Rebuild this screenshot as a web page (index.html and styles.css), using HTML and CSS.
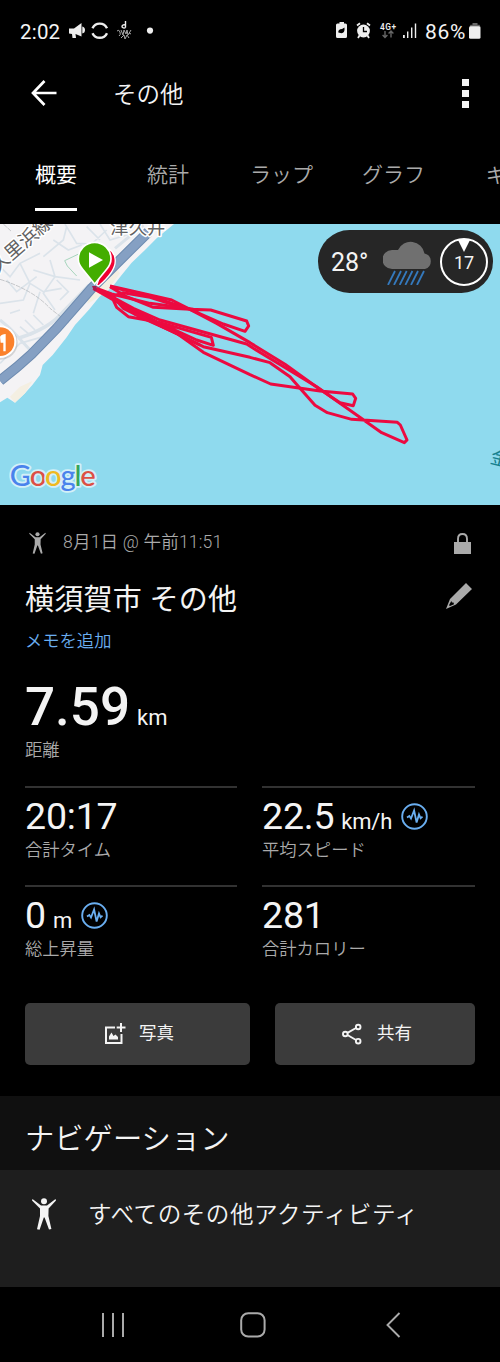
FILE: index.html
```html
<!DOCTYPE html>
<html lang="ja">
<head>
  <meta charset="UTF-8" />
  <meta name="viewport" content="width=device-width, initial-scale=1.0"/>
  <title>その他</title>
  <link rel="stylesheet" href="styles.css">
</head>
<body>
  <svg width="0" height="0" class="defs">
    <symbol id="person" viewBox="0 0 24 32">
      <circle cx="12" cy="3.3" r="3"/>
      <path d="M0.5 1 L9 7.6 H15 L23.5 1 L24 2.6 L16.6 10.4 L16.4 18 L19.4 31 L17 31.6 L12.6 19.6 H11.8 L7.6 31.8 L5 31.2 L8 18 V10.4 L0 2.6Z"/>
    </symbol>
    <symbol id="pulse" viewBox="0 0 27 27">
      <circle cx="13.5" cy="13.5" r="12.3" fill="none" stroke="#6aaef0" stroke-width="1.9"/>
      <path d="M6 14.6 L8.4 13 L10 15.6 L13.1 7.5 L15.6 19.5 L18 11.5 L19.6 15.3 L21.5 13.6" fill="none" stroke="#6aaef0" stroke-width="1.8"/>
    </symbol>
  </svg>

  <div class="status-bar">
    <span class="clock">2:02</span>
    <svg class="status-left" width="90" height="20" viewBox="0 0 90 20" fill="#eee">
      <path d="M0 7.5 H5 L12.500 2 V15.5 L6.500 13 L7 17 H3.500 L3 13 L0 12.500Z M13.300 5.500 Q16 6 16 9 Q16 12 13.300 12.500Z"/>
      <path d="M23.5 7.2 A8 8 0 0 1 38 7.2 M23.5 12.2 A8 8 0 0 0 38 12.2" fill="none" stroke="#eee" stroke-width="2.4"/>
      <path d="M56.5 0 V6.5 M56.5 4.3 a2 1.6 0 1 0 0 2.2" fill="none" stroke="#eee" stroke-width="1.4"/>
      <path d="M48 10 q2 -2 3 1 t-1 4 M52 9 l2 5 l1 -5 l2 4 l1 -4 l1 5 l3 -5 M52 17 l3 -3 l1 4 l2 -4 l2 3 M60 12 l2 1" fill="none" stroke="#aaa" stroke-width="1"/>
      <circle cx="81" cy="9.6" r="3.1"/>
    </svg>
    <svg class="status-right" width="82" height="18" viewBox="0 0 82 18" fill="#eee">
      <path d="M3.5 1.5 V0 H8 V1.5 H9.5 Q11 1.5 11 3 V14.5 Q11 16 9.5 16 H1.5 Q0 16 0 14.5 V3 Q0 1.5 1.5 1.5Z"/>
      <path d="M2.3 10.5 Q2 7 6 7 L8.5 5.5 Q9 11 5.5 11.3 Z" fill="#000"/>
      <circle cx="27.5" cy="9" r="6.4"/>
      <path d="M21 3.5 L24 1.2 M31 1.2 L34 3.5 M23.5 13.5 L22 16 M31.5 13.5 L33 16" stroke="#eee" stroke-width="1.8"/>
      <path d="M27.5 5 V9.5 H31" fill="none" stroke="#000" stroke-width="1.3"/>
      <text x="44" y="7.5" font-size="8.3" font-weight="600" textLength="16">4G+</text>
      <path d="M49 9 V15.5 M46.6 13 L49 15.5 L51.4 13 M55 15.5 V9 M52.6 11.5 L55 9 L57.4 11.5" fill="none" stroke="#666" stroke-width="1.4"/>
      <path d="M67 13 h1.8 v3 h-1.8z M71 9.5 h1.4 v6.5 h-1.4z M75 5.5 h1.4 v10.5 h-1.4z M78.8 1.5 h1.4 v14.5 h-1.4z"/>
    </svg>
    <span class="battery-text">86%</span>
    <svg width="12" height="16" viewBox="0 0 12 16">
      <path d="M3.5 0 h5 v1.8 h2 l1 2 H.5 l1 -2 h2z" fill="#666"/>
      <rect y="3.2" width="11.5" height="12.5" rx="1.5" fill="#eee"/>
    </svg>
  </div>

  <header class="app-bar">
    <svg width="26" height="26" viewBox="0 0 26 26" fill="none" stroke="#fff" stroke-width="2.7">
      <path d="M25.500 13 H2 M13.500 1 L2 13 L13.500 25"/>
    </svg>
    <h1>その他</h1>
    <div class="menu"><i></i><i></i><i></i></div>
  </header>

  <nav class="tabs">
    <a class="tab active">概要</a>
    <a class="tab">統計</a>
    <a class="tab">ラップ</a>
    <a class="tab">グラフ</a>
    <a class="tab">ギ</a>
  </nav>

  <div class="map">
    <svg class="map-art" width="500" height="281" viewBox="0 12 1500 843">
      <rect y="12" width="1500" height="843" fill="#8fdaee"/>
      <!-- land and beach -->
      <path d="M0 12 H522 L470 55 L435 90 L395 128 L365 165 L335 203 L300 228 L268 268 L225 315 L200 352 L158 405 L128 435 L120 465 L97 495 L75 520 L45 548 L22 533 L0 547Z" fill="#f4f3f5"/>
      <path d="M268 214 L345 140 L360 160 L330 200 L300 228 L262 252 Z M60 500 L97 483 L75 520 L45 548 L30 530Z" fill="#f4efe2"/>
      <g fill="none" stroke="#dbe3ea" stroke-width="5">
        <path d="M195 12 L230 70 L275 72 L320 30 M160 60 L205 90 L245 75 M130 110 L190 60 L200 20 M100 150 L165 170 L240 180 M150 120 L165 170 L130 220 L165 270 M60 130 L90 190 L70 240 L0 250 M90 190 L130 215 L185 205 M0 140 L30 170 L60 130 L120 100 M20 180 L50 215 L110 170 M120 215 L100 280 M170 180 L205 215 L180 240 M30 280 L60 270 M60 320 L90 345 L120 330 M75 300 L105 330 M100 285 L130 315 M10 350 L40 330 M0 430 L60 370 L130 350 M260 20 L300 60 M300 12 L330 60 L395 40"/>
        <path d="M55 355 Q150 325 190 275 L268 195" stroke-width="11"/>
        <path d="M0 300 L30 325 L90 390 M345 85 L430 15" stroke-width="9"/>
      </g>
      <path d="M0 178 Q100 210 150 265 L205 308 M10 12 L35 35" fill="none" stroke="#aeb0b3" stroke-width="2" stroke-dasharray="14 3"/>
      <path d="M240 100 L194 122 L202 138 L230 168" fill="none" stroke="#a7d5bd" stroke-width="3"/>
      <path d="M445 36 L360 120 L275 205 L170 325 L95 402 L50 442 L0 482" fill="none" stroke="#6d8bb0" stroke-width="31"/>
      <path d="M445 36 L360 120 L275 205 L170 325 L95 402 L50 442 L0 482" fill="none" stroke="#85a0c3" stroke-width="25"/>
      <g class="map-label">
        <text transform="translate(-8 160) rotate(-41)" font-size="56">久里浜線</text>
        <text x="331" y="42" font-size="55">津久井</text>
        <text class="sea" transform="translate(1468 728) rotate(14)" font-size="58">金</text>
      </g>
      <circle cx="2" cy="368" r="51" fill="#888" opacity=".3"/>
      <circle cx="0" cy="365" r="49" fill="#fff"/>
      <circle cx="0" cy="365" r="43" fill="#fb812b"/>
      <path d="M0 350 Q5 342 17 342 V394 H10 V368 H2Z" fill="#fff"/>
      <!-- recorded track -->
      <g fill="none" stroke="#ec0a40" stroke-width="9" stroke-linejoin="round">
        <path d="M330 198 L515 240 L570 268 L670 312 L735 334 L746 318 L740 303 L632 270 L570 268 L460 262 L380 230 L330 200"/>
        <path d="M280 205 L340 240 L470 305 L590 360 L640 376 L634 352 L540 325 L470 305 L385 290 L350 262 L335 230 L280 205"/>
        <path d="M330 200 L440 225 L570 268 L650 310 L750 368 L855 433 L955 505 L1020 548 L1060 557 L1067 535 L1058 522 L960 513 L812 492 L750 464 L610 397 L530 340 L440 300 L370 265 L335 225"/>
        <path d="M335 230 L400 265 L480 300 L740 372 L760 385 L950 500 L1088 598 L1145 638 L1213 668 L1221 660 L1201 615 L1192 607 L1055 598 L982 578 L945 556 L900 505 L870 470 L810 428 L750 412 L610 380 L470 312 L385 270 L335 230 L370 218 L450 232 L545 262"/>
        <path d="M290 205 L335 222 L450 250 L580 268 M400 280 L500 325 L600 375"/>
      </g>
      <!-- finish and start pins -->
      <path d="M296 198 Q352 150 345 115 Q342 95 328 88 L290 195Z" fill="#f00032" stroke="#fff" stroke-width="4"/>
      <path d="M284 192 L248 148 Q234 132 235 116 A49 49 0 0 1 333 116 Q333 132 320 148Z" fill="#43ad00" stroke="#fff" stroke-width="5"/>
      <path d="M267 97 L309 120 L267 143Z" fill="#fff"/>
      <path d="M276 198 h14 v14 h-8z" fill="#a51c4f"/>
      <text class="google" x="29" y="798" textLength="258"><tspan fill="#4a83ec">G</tspan><tspan fill="#dd5045">o</tspan><tspan fill="#efb920">o</tspan><tspan fill="#4a83ec">g</tspan><tspan fill="#36a55a">l</tspan><tspan fill="#dd5045">e</tspan></text>
    </svg>
    <div class="weather">
      <span class="temp">28°</span>
      <svg width="50" height="46" viewBox="0 0 50 46">
        <path d="M9 30 A9.5 9.5 0 0 1 9 11 L15 11 A14 14 0 0 1 41.5 14.5 A8 8 0 0 1 42 30Z" fill="#707070"/>
        <path d="M5 46 L12 32 M11 46 L18 32 M16.700 46 L23.7 32 M22.400 46 L29.4 32 M28 46 L35 32 M34 46 L41 32" stroke="#3479bd" stroke-width="1.8"/>
      </svg>
      <div class="wind">
        <svg width="12" height="12" viewBox="0 0 12 12"><path d="M0 0 H12 L6 12Z" fill="#fff"/></svg>
        <span>17</span>
      </div>
    </div>
  </div>

  <main class="summary">
    <div class="date-row">
      <svg width="17" height="22" fill="#aaa"><use href="#person"/></svg>
      <span>8月1日 @ 午前11:51</span>
      <svg class="lock" width="17" height="21" viewBox="0 0 17 21">
        <path d="M4 10 V6 Q4 1 8.500 1 T13 6 V10" fill="none" stroke="#aaa" stroke-width="1.9"/>
        <rect y="9" width="17" height="12" fill="#aaa"/>
      </svg>
    </div>
    <div class="title-row">
      <h2>横須賀市 その他</h2>
      <svg width="26" height="26" viewBox="0 0 26 26" fill="#aaa">
        <path fill-rule="evenodd" d="M20 0 L26 6 L10 21.5 L0 26 L4 16Z M5.300 18 L3 22.200 L4 23 L8 21.300 L7.500 19.500 L6 19.500Z"/>
      </svg>
    </div>
    <a class="note">メモを追加</a>

    <div class="distance"><b>7.59</b><span class="unit">km</span></div>
    <div class="label">距離</div>

    <div class="stats">
      <div class="stat">
        <div class="value">20:17</div>
        <div class="label">合計タイム</div>
      </div>
      <div class="stat">
        <div class="value">22.5<span class="unit">km/h</span><svg class="badge" width="27" height="27"><use href="#pulse"/></svg></div>
        <div class="label">平均スピード</div>
      </div>
      <div class="stat">
        <div class="value">0<span class="unit">m</span><svg class="badge" width="27" height="27"><use href="#pulse"/></svg></div>
        <div class="label">総上昇量</div>
      </div>
      <div class="stat">
        <div class="value">281</div>
        <div class="label">合計カロリー</div>
      </div>
    </div>

    <div class="actions">
      <button class="photo-btn">
        <svg width="22" height="22" viewBox="0 0 22 22" fill="none" stroke="#f4f4f4">
          <path d="M11 4.500 H2 V20 H17.500 V11" stroke-width="2"/>
          <path d="M17 0 V9 M12.700 4.500 H21.500" stroke-width="2"/>
          <path d="M5 16.500 V13.500 L7.500 9.500 L9.500 13 L11.500 11.500 L14 14 V16.500Z" fill="#f4f4f4" stroke="none"/>
        </svg>
        <span>写真</span>
      </button>
      <button class="share-btn">
        <svg width="20" height="22" viewBox="0 0 20 22" fill="none" stroke="#f4f4f4" stroke-width="1.900">
          <path d="M5.500 9.800 L14 5 M5.500 12 L14 17"/>
          <circle cx="3.300" cy="11" r="2.300"/><circle cx="16.200" cy="4" r="2.300"/><circle cx="16.200" cy="18.200" r="2.300"/>
        </svg>
        <span>共有</span>
      </button>
    </div>
  </main>

  <h3 class="section-title">ナビゲーション</h3>
  <div class="list-item">
    <svg width="24" height="32" fill="#f4f4f4"><use href="#person"/></svg>
    <span>すべてのその他アクティビティ</span>
  </div>

  <footer class="nav-bar">
    <svg width="24" height="24" viewBox="0 0 24 24" stroke="#aaa" stroke-width="2"><path d="M2 0 V24 M12 0 V24 M22 0 V24"/></svg>
    <svg class="home" width="26" height="26" viewBox="0 0 26 26"><rect x="1.200" y="1.200" width="23.400" height="23.400" rx="7" fill="none" stroke="#aaa" stroke-width="2"/></svg>
    <svg width="15" height="26" viewBox="0 0 15 26" fill="none" stroke="#aaa" stroke-width="1.900"><path d="M13.500 1 L1.500 13 L13.500 25"/></svg>
  </footer>
</body>
</html>
```

FILE: styles.css
```css
* { box-sizing: border-box; }
body {
  margin: 0;
  width: 500px;
  height: 1362px;
  overflow: hidden;
  background: #000;
  color: #f4f4f4;
  font-family: Roboto, 'Noto Sans CJK JP', sans-serif;
}
svg { display: block; flex: none; }
.defs { display: none; }
h1, h2, h3 { margin: 0; font-weight: 350; }
.status-bar {
  height: 62px;
  padding: 0 19px 0 20px;
  display: flex;
  align-items: center;
}
.clock, .battery-text { padding-top: 1px; font-size: 20.5px; line-height: 24px; }
.clock { letter-spacing: 0.2px; }
.status-left { margin-left: 9px; }
.status-right { margin-left: auto; }
.battery-text { margin: 0 3px 0 7px; font-size: 21px; letter-spacing: 0.7px; }
.app-bar {
  height: 62px;
  padding: 0 31px;
  display: flex;
  align-items: center;
}
h1 {
  margin-left: 56px;
  padding-top: 3px;
  font-size: 23.5px;
  line-height: 34px;
}
.menu {
  margin-left: auto;
  display: flex;
  flex-direction: column;
  gap: 4px;
}
.menu i { width: 7px; height: 7px; background: #f4f4f4; }
.tabs {
  height: 100px;
  padding: 33px 0 13px 35px;
  display: grid;
  grid-template-columns: 112px 103px 112px 124px 60px;
  justify-items: start;
  overflow: hidden;
}
.tab {
  height: 54px;
  font-size: 21px;
  line-height: 36px;
  font-weight: 350;
  color: #aaa;
  white-space: nowrap;
}
.tab.active {
  color: #fff;
  font-weight: 400;
  border-bottom: 3px solid #fff;
}
.map { position: relative; height: 281px; }
.map-label {
  fill: #626262;
  stroke: #fff;
  stroke-width: 9px;
  stroke-linejoin: round;
  paint-order: stroke;
}
.map-label .sea { fill: #16808f; stroke: none; }
.google {
  font-family: Lato, sans-serif;
  font-size: 88px;
  font-weight: 500;
  stroke: #d3f0f8;
  stroke-width: 11px;
  stroke-linejoin: round;
  paint-order: stroke;
}
.weather {
  position: absolute;
  top: 6px;
  right: 7px;
  width: 175px;
  height: 63px;
  padding: 0 5px 0 13px;
  border-radius: 32px;
  background: #262626;
  display: flex;
  align-items: center;
}
.temp { width: 52px; font-size: 25px; line-height: 30px; padding-top: 3px; }
.wind {
  margin-left: 7px;
  width: 48px;
  height: 48px;
  flex: none;
  border: 2px solid #fff;
  border-radius: 50%;
  display: flex;
  flex-direction: column;
  align-items: center;
}
.wind span { font-size: 18px; line-height: 22px; }
.summary {
  height: 591px;
  padding: 22px 25px 0;
}
.date-row {
  height: 32px;
  padding-left: 4px;
  display: flex;
  align-items: center;
  font-size: 17.6px;
  line-height: 26px;
  font-weight: 350;
  color: #aaa;
}
.date-row span { margin: -3px 0 0 17px; letter-spacing: 0.15px; }
.lock { margin: 0 4px 0 auto; }
.title-row {
  height: 48px;
  margin-top: 15px;
  display: flex;
  align-items: center;
  justify-content: space-between;
}
h2 { font-size: 29px; font-weight: 400; letter-spacing: 0.25px; margin-top: -2px; }
.title-row svg { margin: -4px 3px 0 0; }
.note {
  display: block;
  height: 36px;
  font-size: 17.3px;
  line-height: 39px;
  font-weight: 350;
  color: #6aaef0;
}
.distance {
  height: 80px;
  padding-top: 19px;
  line-height: 61px;
  white-space: nowrap;
}
.distance b { font-size: 53px; font-weight: 500; }
.unit { margin-left: 7px; font-size: 22px; }
.label {
  height: 24px;
  font-size: 17.3px;
  line-height: 24px;
  font-weight: 350;
  color: #aaa;
}
.stats {
  margin-top: 24px;
  display: grid;
  grid-template-columns: 212px 213px;
  column-gap: 25px;
  grid-auto-rows: 99px;
}
.stat { border-top: 2px solid #323232; }
.value {
  height: 50px;
  display: flex;
  align-items: baseline;
  font-size: 37.5px;
  line-height: 56px;
  letter-spacing: -0.2px;
}
.badge { margin-left: 9px; align-self: flex-start; margin-top: 15px; }
.actions {
  margin-top: 19px;
  display: flex;
  gap: 25px;
}
button {
  height: 62px;
  padding: 0;
  border: none;
  border-radius: 5px;
  background: #3b3b3b;
  color: #f4f4f4;
  font-family: inherit;
  font-size: 17.5px;
  line-height: 26px;
  display: flex;
  align-items: center;
  justify-content: center;
}
button span { margin-top: -2px; }
.photo-btn { width: 225px; padding-left: 3px; gap: 13px; }
.share-btn { width: 200px; padding-left: 4px; gap: 15px; }
.section-title {
  height: 74px;
  padding-left: 25px;
  background: #101010;
  font-size: 29.3px;
  line-height: 87px;
}
.list-item {
  height: 117px;
  padding: 27px 32px 0;
  background: #1e1e1e;
  display: flex;
  align-items: flex-start;
  font-size: 23.6px;
  line-height: 36px;
  font-weight: 350;
}
.list-item svg { margin-top: 1px; }
.list-item span { margin-left: 32px; letter-spacing: 0.5px; white-space: nowrap; }
.nav-bar {
  height: 75px;
  padding: 0 99px 0 101px;
  display: flex;
  align-items: center;
  justify-content: space-between;
}
.home { margin-right: 6px; }
```
